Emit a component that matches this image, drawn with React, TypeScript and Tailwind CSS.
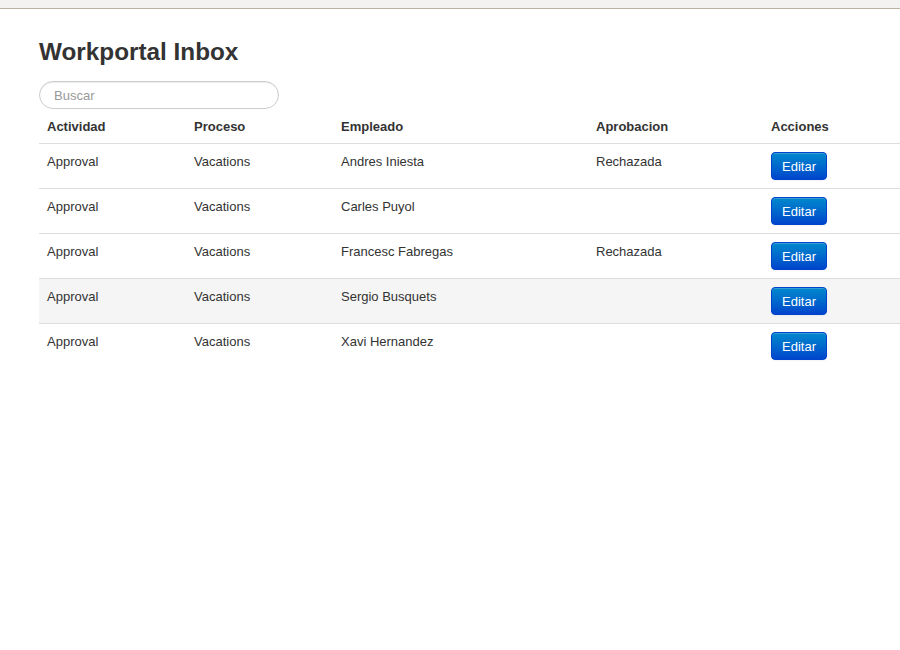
const rows = [
  { actividad: 'Approval', proceso: 'Vacations', empleado: 'Andres Iniesta', aprobacion: 'Rechazada' },
  { actividad: 'Approval', proceso: 'Vacations', empleado: 'Carles Puyol', aprobacion: '' },
  { actividad: 'Approval', proceso: 'Vacations', empleado: 'Francesc Fabregas', aprobacion: 'Rechazada' },
  { actividad: 'Approval', proceso: 'Vacations', empleado: 'Sergio Busquets', aprobacion: '', hover: true },
  { actividad: 'Approval', proceso: 'Vacations', empleado: 'Xavi Hernandez', aprobacion: '' },
];

export default function App() {
  return (
    <div className="min-h-[650px] bg-white text-[13px] leading-5 text-[#333] font-['Liberation_Sans',Arial,sans-serif] overflow-hidden">
      <div className="h-[9px] bg-[#f4f2f0] border-b border-[#bcb1a3]" />

      <div className="pl-[39px]">
        <h1 className="mt-[28px] text-[24.3px] leading-[30px] font-bold text-[#333]">Workportal Inbox</h1>

        <input
          type="text"
          placeholder="Buscar"
          className="mt-[14px] block w-[240px] h-[28px] rounded-full border border-[#ccc] px-[14px] text-[13px] text-[#555] placeholder:text-[#999] outline-none shadow-[inset_0_1px_1px_rgba(0,0,0,0.075)]"
        />

        <table className="w-full border-collapse text-left">
          <thead>
            <tr>
              <th className="w-[147px] px-2 pt-2 pb-[6px] font-bold align-bottom">Actividad</th>
              <th className="w-[147px] px-2 pt-2 pb-[6px] font-bold align-bottom">Proceso</th>
              <th className="w-[255px] px-2 pt-2 pb-[6px] font-bold align-bottom">Empleado</th>
              <th className="w-[175px] px-2 pt-2 pb-[6px] font-bold align-bottom">Aprobacion</th>
              <th className="px-2 pt-2 pb-[6px] font-bold align-bottom">Acciones</th>
            </tr>
          </thead>
          <tbody>
            {rows.map((r) => (
              <tr key={r.empleado} className={`border-t border-[#ddd] ${r.hover ? 'bg-[#f5f5f5]' : ''}`}>
                <td className="p-2 align-top">{r.actividad}</td>
                <td className="p-2 align-top">{r.proceso}</td>
                <td className="p-2 align-top">{r.empleado}</td>
                <td className="p-2 align-top">{r.aprobacion}</td>
                <td className="p-2 align-top">
                  <button className="h-[28px] px-[10px] pt-px rounded-[4px] border border-[#0044cc] bg-gradient-to-b from-[#0088cc] to-[#0044cc] text-white text-[13px] leading-5 shadow-[inset_0_1px_0_rgba(255,255,255,0.2),0_1px_2px_rgba(0,0,0,0.05)]">
                    Editar
                  </button>
                </td>
              </tr>
            ))}
          </tbody>
        </table>
      </div>
    </div>
  );
}
